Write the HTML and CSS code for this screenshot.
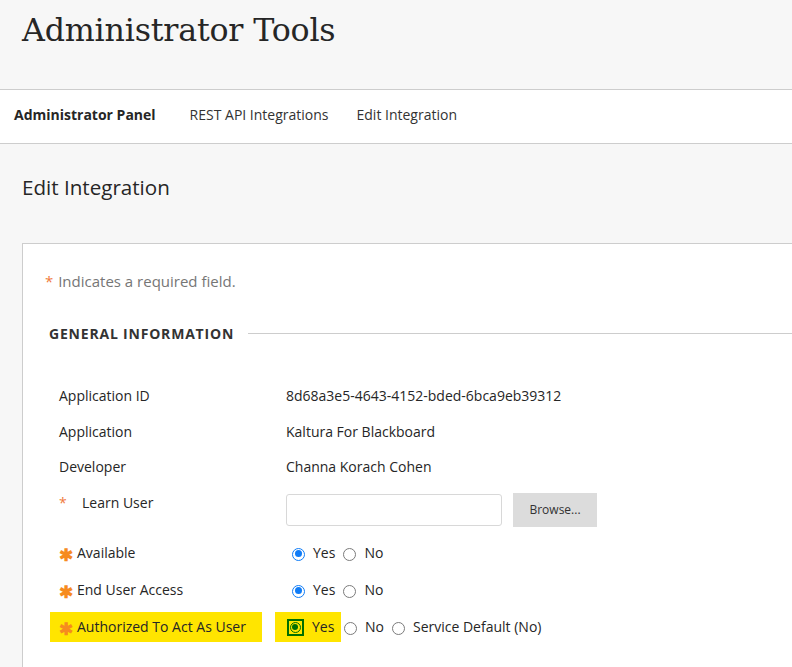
FILE: index.html
```html
<!DOCTYPE html>
<html lang="en">
<head>
	<meta charset="UTF-8">
	<title>Administrator Tools</title>
	<link rel="stylesheet" href="styles.css">
</head>
<body>
	<div class="page-head">
		<h1>Administrator Tools</h1>
	</div>
	<!-- 面包屑 -->
	<div class="crumbs">
		<span class="crumb current">Administrator Panel</span>
		<span class="crumb">REST API Integrations</span>
		<span class="crumb last">Edit Integration</span>
	</div>
	<div class="content">
		<h2>Edit Integration</h2>
		<div class="panel">
			<p class="note"><span class="req-small">*</span> Indicates a required field.</p>
			<div class="legend">
				<span>GENERAL INFORMATION</span>
			</div>
			<div class="fields">
				<div class="row">
					<div class="label">Application ID</div>
					<div class="value">8d68a3e5-4643-4152-bded-6bca9eb39312</div>
				</div>
				<div class="row">
					<div class="label">Application</div>
					<div class="value">Kaltura For Blackboard</div>
				</div>
				<div class="row">
					<div class="label">Developer</div>
					<div class="value">Channa Korach Cohen</div>
				</div>
				<div class="row row-input">
					<div class="label"><span class="req-small wide">*</span>Learn User</div>
					<div class="value">
						<input type="text" class="text-in">
						<button type="button" class="browse">Browse...</button>
					</div>
				</div>
				<div class="row row-radio">
					<div class="label"><span class="req">&#10033;</span>Available</div>
					<div class="value">
						<span class="radio on"></span><span class="opt">Yes</span>
						<span class="radio"></span><span class="opt">No</span>
					</div>
				</div>
				<div class="row row-radio">
					<div class="label"><span class="req">&#10033;</span>End User Access</div>
					<div class="value">
						<span class="radio on"></span><span class="opt">Yes</span>
						<span class="radio"></span><span class="opt">No</span>
					</div>
				</div>
				<div class="row row-radio">
					<div class="label"><span class="mark mark-label"><span class="req">&#10033;</span>Authorized To Act As User</span></div>
					<div class="value">
						<span class="mark mark-yes"><span class="focus-box"><span class="radio on green"></span></span><span class="opt">Yes</span></span>
						<span class="radio"></span><span class="opt">No</span>
						<span class="radio"></span><span class="opt">Service Default (No)</span>
					</div>
				</div>
			</div>
		</div>
	</div>
</body>
</html>
```

FILE: styles.css
```css
*{margin: 0;padding: 0;box-sizing: border-box;}
html,body{overflow: hidden;}
body{
	font-family: "Open Sans", "Liberation Sans", sans-serif;
	color: #262626;
	background: #f7f7f7;
	height: 667px;
}
.page-head{height: 90px;border-bottom: 1px solid #cdcdcd;padding: 8px 0 0 22px;}
.page-head h1{font-family: "DejaVu Serif", "Liberation Serif", serif;font-weight: normal;font-size: 31.7px;line-height: 44px;color: #262626;letter-spacing: -0.2px;}
.crumbs{background: #fff;height: 54px;border-bottom: 1px solid #cdcdcd;display: flex;align-items: center;padding: 0 0 4px 14px;font-size: 14px;color: #333;}
.crumb{margin-right: 34px;}
.crumb:nth-child(2){margin-right: 28px;}
.crumb.current{font-weight: bold;color: #262626;}
.content{padding: 29px 0 0 22px;}
.content h2{font-weight: normal;font-size: 20.6px;line-height: 28px;color: #262626;}
.panel{margin-top: 42px;margin-right: -4px;background: #fff;border: 1px solid #cdcdcd;border-right: none;border-bottom: none;height: 424px;padding: 26px 0 0 22px;}
.note{font-size: 15px;color: #767676;line-height: 22px;}
.req-small{color: #f07a3d;margin-right: 1px;}
.req-small.wide{display: inline-block;width: 22px;}
.legend{display: flex;align-items: center;margin: 32px 0 0 4px;}
.legend span{font-size: 14px;font-weight: bold;letter-spacing: 0.8px;color: #333;}
.legend::after{content: "";flex: 1;height: 1px;background: #cdcdcd;margin-left: 14px;}
.fields{margin: 35px 0 0 14px;font-size: 14px;}
.row{display: flex;align-items: center;height: 35.5px;}
.row-input{height: 49.5px;align-items: flex-start;}
.row-input .label{padding-top: 8px;}
.row-radio{height: 37px;}
.label{width: 227px;flex: none;display: flex;align-items: center;}
.value{display: flex;align-items: center;}
.row-input .value{align-items: flex-start;}
.text-in{width: 216px;height: 32px;border: 1px solid #d8d8d8;border-radius: 3px;margin-top: 9px;}
.browse{margin: 8px 0 0 11px;width: 84px;height: 34px;background: #dcdcdc;border: none;font-family: inherit;font-size: 12px;color: #333;}
.req{color: #f68b1f;font-size: 17px;font-weight: bold;width: 18px;line-height: 1;position: relative;top: 2px;}
.radio{width: 13px;height: 13px;border-radius: 50%;border: 1px solid #7b7b7b;margin: 3px 8px 0 8px;display: inline-block;position: relative;flex: none;}
.value > .radio:first-child{margin-left: 6px;}
.mark-yes + .radio{margin-left: 3px;}
.radio.on{border-color: #0f7cf7;border-width: 1.5px;}
.radio.on::after{content: "";position: absolute;left: 1.5px;top: 1.5px;width: 7px;height: 7px;border-radius: 50%;background: #0f7cf7;}
.mark{background: #ffe500;display: inline-flex;align-items: center;height: 30px;}
.mark-label{margin-left: -9px;padding-left: 9px;width: 212px;}
.mark-yes{margin-left: -11px;padding-left: 12px;width: 66px;}
.focus-box{display: inline-flex;align-items: center;justify-content: center;width: 17px;height: 17px;border: 2px solid #006f00;margin: 2px 8px 0 0;}
.focus-box .radio{margin: 0;width: 11px;height: 11px;}
.radio.green{border-color: #006f00;}
.radio.green::after{background: #006f00;left: 1px;top: 1px;width: 6px;height: 6px;}
```
